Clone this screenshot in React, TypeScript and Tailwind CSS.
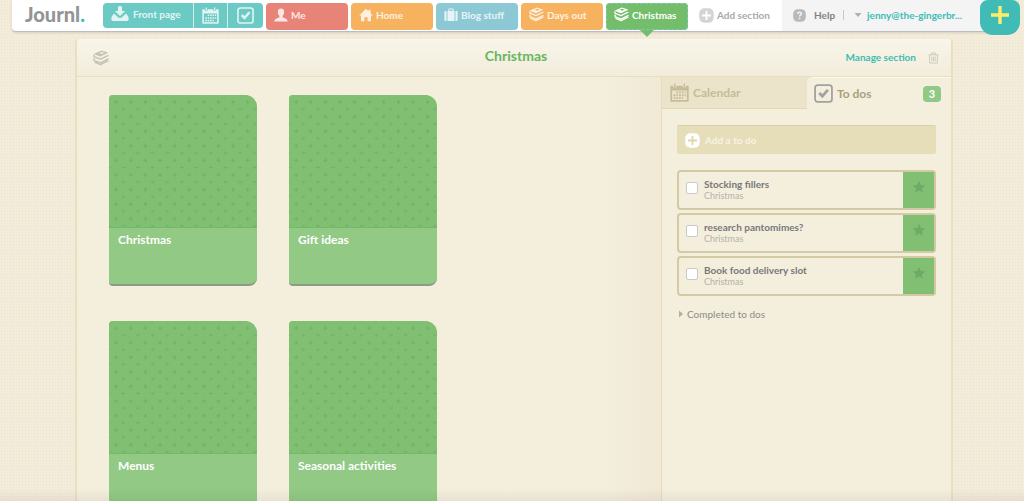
import { useState } from "react";
import type { ReactNode } from "react";

const books = ["Christmas", "Gift ideas", "Menus", "Seasonal activities"];

const initialTodos = [
  { id: "stocking", title: "Stocking fillers", section: "Christmas", done: false },
  { id: "panto", title: "research pantomimes?", section: "Christmas", done: false },
  { id: "food", title: "Book food delivery slot", section: "Christmas", done: false },
];

function DownloadIcon() {
  return (
    <svg width="18" height="16" viewBox="0 0 18 16" fill="currentColor" aria-hidden="true">
      <path d="M7 .5Q9-.5 11 .5V5h3.200L9 10 3.800 5H7z" />
      <path d="M3 7.500.8 10.500Q.4 11 .4 12v1.600Q.4 15 1.800 15h14.400q1.400 0 1.400-1.400V12q0-1-.4-1.500L15 7.500l-3.600 3.600Q9 13 6.600 11.100z" />
    </svg>
  );
}

function CalendarIcon({ size }: { size: number }) {
  return (
    <svg width={size} height={size} viewBox="0 0 18 18" aria-hidden="true">
      <path
        fill="currentColor"
        fillRule="evenodd"
        d="M1 2.500h2V4h3V2.500h6V4h3V2.500h2q.7 0 .7.700V17q0 .8-.8.8H1.100Q.3 17.800.3 17V3.200q0-.7.7-.7zM2 7v9.200h14V7z"
      />
      <path fill="none" stroke="currentColor" strokeWidth="1.300" strokeLinecap="round" d="M4.500.8v2.400M13.500.8v2.400" />
      <path
        fill="none"
        stroke="currentColor"
        strokeWidth="1.700"
        strokeDasharray="1.700 .9"
        d="M6 8.800h9M3.400 11.600H15M3.400 14.400h9"
      />
    </svg>
  );
}

function TickIcon({ size }: { size: number }) {
  return (
    <svg width={size} height={size} viewBox="0 0 18 18" fill="none" stroke="currentColor" aria-hidden="true">
      <rect x="1" y="1" width="16" height="16" rx="2.500" strokeWidth="1.700" />
      <path d="m5 8.600 2.900 3 5.300-6" strokeWidth="2.600" />
    </svg>
  );
}

function PersonIcon() {
  return (
    <svg width="14" height="14" viewBox="0 0 14 14" fill="currentColor" aria-hidden="true">
      <path d="M7 .5c2.200 0 3.300 1.500 3.200 3.600C10.100 6 9.300 7.300 8.600 8v1.200c1 .8 4.900.9 5.100 4.300H.3C.5 10.100 4.400 10 5.400 9.200V8C4.700 7.300 3.900 6 3.800 4.100 3.700 2 4.800.5 7 .5z" />
    </svg>
  );
}

function HomeIcon() {
  return (
    <svg width="14" height="14" viewBox="0 0 14 14" fill="currentColor" aria-hidden="true">
      <path d="m7 .8 2.600 2.500V1.700h2v3.600L13.800 7.600H12v5.700H8.600V9.200H5.400v4.100H2V7.600H.2z" />
    </svg>
  );
}

function CaseIcon() {
  return (
    <svg width="14" height="14" viewBox="0 0 14 14" fill="currentColor" aria-hidden="true">
      <path d="M2.500 3v10h-.9Q.4 13 .4 11.800V4.200Q.4 3 1.600 3zM11.500 3v10h.9q1.200 0 1.200-1.200V4.200Q13.600 3 12.400 3zM3.500 3h7v10h-7z" />
      <path d="M4.900 3V1.600Q4.900 1 5.500 1h3q.6 0 .6.600V3" fill="none" stroke="currentColor" strokeWidth="1.100" />
    </svg>
  );
}

function BooksIcon({ size }: { size: number }) {
  return (
    <svg width={size} height={size} viewBox="0 0 16 16" aria-hidden="true">
      <path
        fill="currentColor"
        fillRule="evenodd"
        d="M8.500.4 15.300 2.800 7.400 6.600.6 4.100zM8.700 1.900 6.200 3l2.500.9 2.600-1.100z"
      />
      <g fill="none" stroke="currentColor" strokeWidth="1.400" strokeLinejoin="round">
        <path d="M1.300 4.600Q.3 6.200 1.500 6.900l6 2.300 7.900-3.900" />
        <path d="M1.700 8.300Q.3 9.800 1.500 10.600l6 2.300 7.900-3.900" />
        <path d="m1.500 12 6 2.600 7.900-3.900" />
      </g>
    </svg>
  );
}

function PlusBadge({ plus }: { plus: string }) {
  return (
    <svg width="15" height="15" viewBox="0 0 15 15" className="shrink-0" aria-hidden="true">
      <rect x=".3" y=".3" width="14.400" height="14.400" rx="5" fill="currentColor" />
      <path d="M7.500 3v9M3 7.500h9" stroke={plus} strokeWidth="1.800" />
    </svg>
  );
}

function Caret({ className }: { className: string }) {
  return (
    <svg width="8" height="8" viewBox="0 0 8 8" fill="currentColor" className={className} aria-hidden="true">
      <path d="M.5 2h7L4 6z" />
    </svg>
  );
}

function SectionTab({ color, icon, children }: { color: string; icon: ReactNode; children: ReactNode }) {
  return (
    <a href="#" className={`flex h-[27px] w-[82px] items-center gap-[3px] rounded pb-1 pl-2 text-white/80 ${color}`}>
      {icon}
      {children}
    </a>
  );
}

function TopBar() {
  return (
    <header className="flex items-start pl-3 pr-1 text-[10px] leading-4 font-bold whitespace-nowrap">
      <div className="flex h-8 min-w-0 flex-1 rounded-bl border-b border-[#b9bcc0] bg-white shadow-sm">
        <a href="#" className="w-[91px] shrink-0 pl-[13px] text-xl leading-7 font-black text-[#929495]">
          Journl<span className="text-[#3fbcb6]">.</span>
        </a>
        <nav className="flex shrink-0 items-start gap-[3px] pt-[3px]">
          <div className="flex h-[25px] divide-x divide-white/70 overflow-hidden rounded bg-[#6bcac3] text-white/80">
            <a href="#" className="flex w-[91px] items-center gap-1 pb-1 pl-2">
              <DownloadIcon />
              Front page
            </a>
            <a href="#" aria-label="Calendar" className="flex w-[34px] items-center justify-center">
              <CalendarIcon size={17} />
            </a>
            <a href="#" aria-label="To dos" className="flex w-[35px] items-center justify-center">
              <TickIcon size={17} />
            </a>
          </div>
          <SectionTab color="bg-[#e88378]" icon={<PersonIcon />}>Me</SectionTab>
          <SectionTab color="bg-[#f6b25f]" icon={<HomeIcon />}>Home</SectionTab>
          <SectionTab color="bg-[#8cc9d5]" icon={<CaseIcon />}>Blog stuff</SectionTab>
          <SectionTab color="bg-[#f6b25f]" icon={<BooksIcon size={15} />}>Days out</SectionTab>
          <div className="relative">
            <a
              href="#"
              aria-current="page"
              className="flex h-[27px] w-[82px] items-center gap-[3px] rounded bg-[#74bd6b] pb-1 pl-2 text-white outline-1 -outline-offset-1 outline-dashed outline-[#7ccbb9]"
            >
              <BooksIcon size={15} />
              Christmas
            </a>
            <svg width="14" height="7" viewBox="0 0 14 7" className="absolute left-[34px] top-[27px]" aria-hidden="true">
              <path d="M0 0h14L7 7z" fill="#74bd6b" />
            </svg>
          </div>
          <button type="button" className="flex h-6 items-center gap-[3px] px-2 text-[#a9aaab]">
            <span className="text-[#d3d4d5]">
              <PlusBadge plus="#fff" />
            </span>
            Add section
          </button>
        </nav>
        <div className="ml-auto flex w-[210px] items-start bg-[#f4f4f5] pt-[7px] text-[#7f8183]">
          <a href="#" className="flex items-center gap-2 pl-[11px]">
            <svg width="13" height="13" viewBox="0 0 13 13" aria-hidden="true">
              <rect x=".2" y=".2" width="12.600" height="12.600" rx="4.500" fill="#b7b9bb" />
              <path
                d="M4.700 5c0-2.500 4-2.200 3.700 0-.2 1.200-1.900 1.200-1.900 2.500M6.500 8.800v1.500"
                fill="none"
                stroke="#f4f4f5"
                strokeWidth="1.500"
              />
            </svg>
            Help
          </a>
          <span className="mt-[3px] ml-2 h-[10px] w-px bg-[#c8c9ca]" />
          <button type="button" className="flex items-center gap-[5px] pl-[10px] text-[#3fbcb6]">
            <Caret className="text-[#aeb0b2]" />
            jenny@the-gingerbr...
          </button>
        </div>
      </div>
      <button
        type="button"
        aria-label="Add new"
        className="relative z-10 -ml-3 flex h-[35px] w-10 shrink-0 justify-center rounded-b-[13px] rounded-t-lg bg-[#40bbb5] pt-[6px]"
      >
        <svg width="18" height="18" viewBox="0 0 18 18" aria-hidden="true">
          <path d="M9 0v18M0 9h18" stroke="#fcee6b" strokeWidth="3.400" />
        </svg>
      </button>
    </header>
  );
}

function Book({ title }: { title: string }) {
  const patternId = `cover-${title.replace(/\s/g, "-")}`;
  return (
    <a
      href="#"
      className="flex h-[191px] w-[148px] flex-col overflow-hidden rounded-l-sm rounded-tr-xl rounded-br-lg border-b-2 border-[#8d9a87] bg-[#92c985]"
    >
      <svg className="h-[132px] w-full bg-[#81c073]" aria-hidden="true">
        <defs>
          <pattern id={patternId} width="14.600" height="14.600" patternUnits="userSpaceOnUse">
            <path
              d="M5.200 7.100h4M7.200 5.100v4M12.500 14.300h2.100M0 14.300h2M14.500 12.300v2.300M14.500 0v1.500"
              stroke="#6bb064"
              strokeWidth="1"
            />
          </pattern>
        </defs>
        <rect width="100%" height="100%" fill={`url(#${patternId})`} />
      </svg>
      <span className="flex-1 border-t border-[#74b86a] px-[9px] pt-1 text-xs leading-4 font-bold text-white">
        {title}
      </span>
    </a>
  );
}

function TodoPanel() {
  const [todos, setTodos] = useState(initialTodos);

  const toggle = (id: string) =>
    setTodos(todos.map((t) => (t.id === id ? { ...t, done: !t.done } : t)));

  return (
    <aside className="w-[290px] shrink-0 border-l border-[#e6deba] bg-[#f4eedd]">
      <div className="flex h-8 bg-[#ece4ca] text-xs font-bold" role="tablist">
        <button
          type="button"
          role="tab"
          aria-selected="false"
          className="flex w-[145px] items-center gap-1 border-b border-[#e2d9b2] pl-2 text-[#c6bc99]"
        >
          <CalendarIcon size={19} />
          Calendar
        </button>
        <button
          type="button"
          role="tab"
          aria-selected="true"
          className="flex flex-1 items-center gap-1 rounded-tl-md border-t border-[#fbf8ee] bg-[#f4eedd] pr-[10px] pl-[7px] text-[#aaa07b]"
        >
          <span className="text-[#a1a1a1]">
            <TickIcon size={19} />
          </span>
          To dos
          <span className="ml-auto h-4 w-[18px] rounded bg-[#90c986] text-[11px] leading-4 text-white">3</span>
        </button>
      </div>
      <div className="px-[15px] pt-4 pb-4">
        <label className="flex h-[29px] items-center gap-[5px] rounded-xs border-t border-[#dad0a4] bg-[#e6ddb9] pl-2 text-white">
          <PlusBadge plus="#e0d6ae" />
          <input
            type="text"
            aria-label="Add a to do"
            placeholder="Add a to do"
            className="min-w-0 flex-1 text-[10px] leading-4 font-bold text-[#77787a] outline-none placeholder:text-[#f8f3e3]"
          />
        </label>
        <ul className="mt-4 flex flex-col gap-[3px]">
          {todos.map((todo) => (
            <li key={todo.id} className="flex h-10 rounded border-2 border-[#d3c9a2]">
              <label className="flex flex-1 items-start gap-[6px] pl-[7px]">
                <input
                  type="checkbox"
                  checked={todo.done}
                  onChange={() => toggle(todo.id)}
                  className="mt-[10px] h-3 w-3 appearance-none rounded-xs border border-[#c9c9c9] bg-white checked:bg-[#81c073]"
                />
                <span className="flex flex-col pt-[6px]">
                  <span className="text-[10px] leading-3 font-bold text-[#77787a]">{todo.title}</span>
                  <span className="text-[9px] leading-3 text-[#b4b2a8]">{todo.section}</span>
                </span>
              </label>
              <button
                type="button"
                aria-label={`Star ${todo.title}`}
                className="flex w-[31px] justify-center bg-[#81c073] pt-2"
              >
                <svg width="14" height="14" viewBox="0 0 14 14" aria-hidden="true">
                  <path
                    d="m7 .9 1.900 4 4.400.5-3.300 3 .9 4.300L7 10.500l-3.900 2.200.9-4.300-3.300-3 4.400-.5z"
                    fill="#6dab66"
                  />
                </svg>
              </button>
            </li>
          ))}
        </ul>
        <button type="button" className="mt-[10px] flex items-center text-[10px] leading-4 text-[#8c8c89]">
          <Caret className="mr-[2px] -rotate-90 text-[#b0aea2]" />
          Completed to dos
        </button>
      </div>
    </aside>
  );
}

export default function App() {
  return (
    <div className="flex h-screen flex-col overflow-hidden bg-[#f3ecdb] bg-[radial-gradient(#ece3cc_1px,transparent_1px)] bg-[size:3px_3px] font-['Lato','Open_Sans',sans-serif]">
      <TopBar />
      <main className="mx-[71px] mr-[71px] ml-[75px] mt-1 flex flex-1 flex-col overflow-hidden rounded-t border-x-2 border-[#e8e0bd] bg-[#f4eedd]">
        <div className="grid h-[38px] shrink-0 grid-cols-3 items-center border-b border-[#e8e0bd] bg-linear-to-b from-[#f8f5e9] to-[#f2ecdb] pr-3 pb-1 pl-4">
          <span className="pt-1 text-[#c5c2b5]">
            <BooksIcon size={16} />
          </span>
          <h1 className="text-center text-sm font-bold text-[#67b660]">Christmas</h1>
          <div className="flex items-center justify-end gap-3 pt-1">
            <a href="#" className="text-[10px] font-bold text-[#3fbcb6]">
              Manage section
            </a>
            <button type="button" aria-label="Delete section" className="text-[#ccc8b9]">
              <svg width="11" height="12" viewBox="0 0 12 13" fill="none" stroke="currentColor" aria-hidden="true">
                <path d="M.5 3h11M4 3V1h4v2M1.800 3.200V12h8.400V3.200M4.200 5v5M6 5v5M7.800 5v5" />
              </svg>
            </button>
          </div>
        </div>
        <div className="flex flex-1">
          <section className="flex-1 bg-linear-to-r from-[#f4eedd] from-90% to-[#f1e9d6] pt-[18px] pl-8">
            <div className="flex max-w-[400px] flex-wrap gap-x-8 gap-y-[35px]">
              {books.map((title) => (
                <Book key={title} title={title} />
              ))}
            </div>
          </section>
          <TodoPanel />
        </div>
      </main>
      <div className="pointer-events-none fixed inset-x-0 bottom-0 h-3 bg-linear-to-t from-black/5 to-transparent" />
    </div>
  );
}
